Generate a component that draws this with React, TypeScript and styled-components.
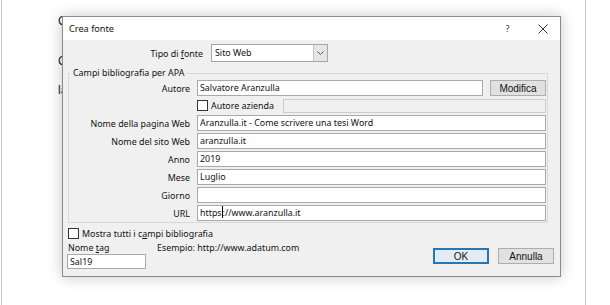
import styled, { createGlobalStyle } from 'styled-components'

const GlobalStyle = createGlobalStyle`
  html, body {
    margin: 0;
    padding: 0;
    background: #ffffff;
  }
  body {
    font-family: 'Segoe UI', 'Noto Sans', sans-serif;
  }
`

const Canvas = styled.div`
  position: relative;
  width: 610px;
  height: 305px;
  overflow: hidden;
  background: #ffffff;
`

const Paper = styled.div`
  box-sizing: border-box;
  margin-left: 1px;
  width: 585px;
  height: 305px;
  border-left: 1px solid #c8c8c8;
  border-right: 1px solid #c8c8c8;
  padding: 15px 0 0 56px;
  font-family: 'Liberation Sans', Arial, sans-serif;
  font-size: 12px;
  line-height: 12px;
  color: #222;
`

const DocLine = styled.p<{ $gap: number }>`
  margin: ${({ $gap }) => $gap}px 0 0;
  white-space: nowrap;
`

const Dialog = styled.div`
  position: absolute;
  left: 62px;
  top: 16px;
  width: 499px;
  height: 261px;
  box-sizing: border-box;
  border: 1px solid #8a8a8a;
  background: #f0f0f0;
  box-shadow: 0 0 14px rgba(0, 0, 0, 0.22);
  display: flex;
  flex-direction: column;
  font-size: 8.9px;
  color: #111;
`

const TitleBar = styled.div`
  height: 23px;
  flex: none;
  background: #ffffff;
  display: flex;
  align-items: center;
  padding-left: 6px;
  font-size: 9.2px;
`

const Title = styled.span`
  flex: 1;
`

const TitleButton = styled.span`
  width: 35px;
  height: 23px;
  display: flex;
  align-items: center;
  justify-content: center;
  color: #333;
`

const Body = styled.div`
  flex: 1;
  display: flex;
  flex-direction: column;
  padding: 4px 6px 7px 0;
`

const TipoRow = styled.div`
  display: flex;
  align-items: center;
  gap: 8px;
`

const TipoLabel = styled.span`
  width: 140px;
  text-align: right;
`

const Select = styled.div`
  box-sizing: border-box;
  width: 117px;
  height: 18px;
  display: flex;
  border: 1px solid #a6a6a6;
  background: #ffffff;
`

const SelectValue = styled.span`
  flex: 1;
  padding-left: 3px;
  line-height: 16px;
`

const SelectArrow = styled.span`
  width: 13px;
  border-left: 1px solid #c4c4c4;
  background: #e6e6e6;
  display: flex;
  align-items: center;
  justify-content: center;
`

const Group = styled.fieldset`
  margin: 5px 6px 0 5px;
  padding: 1px 1px 1px 0;
  border: 1px solid #d9d9d9;
  min-width: 0;
  display: flex;
  flex-direction: column;
  gap: 2px;
`

const Legend = styled.legend`
  padding: 0 2px;
  margin-left: 2px;
  line-height: 12px;
`

const Row = styled.div`
  display: flex;
  align-items: center;
  gap: 7px;
  height: 16px;
`

const Label = styled.span`
  width: 121px;
  text-align: right;
  white-space: nowrap;
`

const Input = styled.div<{ $disabled?: boolean }>`
  box-sizing: border-box;
  flex: 1;
  height: 16px;
  border: 1px solid ${({ $disabled }) => ($disabled ? '#cccccc' : '#a9a9a9')};
  background: ${({ $disabled }) => ($disabled ? '#f0f0f0' : '#ffffff')};
  padding-left: 2px;
  line-height: 14px;
  white-space: nowrap;
`

const Caret = styled.span`
  display: inline-block;
  width: 1px;
  height: 12px;
  background: #000;
  vertical-align: -2px;
`

const Button = styled.div<{ $primary?: boolean; $width: number }>`
  box-sizing: border-box;
  width: ${({ $width }) => $width}px;
  height: 16px;
  display: flex;
  align-items: center;
  justify-content: center;
  background: ${({ $primary }) => ($primary ? '#e2ecf5' : '#e1e1e1')};
  border: ${({ $primary }) => ($primary ? '2px solid #2a76b5' : '1px solid #adadad')};
  font-family: 'Liberation Sans', Arial, sans-serif;
  font-size: 10px;
  color: #111;
`

const CheckRow = styled.label`
  display: flex;
  align-items: center;
  gap: 3px;
  height: 15px;
`

const Box = styled.span`
  box-sizing: border-box;
  width: 11px;
  height: 11px;
  border: 1px solid #333;
  background: #fff;
`

const CompanyRow = styled.div`
  display: flex;
  align-items: center;
  height: 15px;
  padding-left: 128px;
`

const CompanyInput = styled(Input)`
  height: 14px;
  margin-left: 9px;
`

const MostraRow = styled(CheckRow)`
  height: 13px;
  margin: 4px 0 0 5px;
`

const Footer = styled.div`
  display: flex;
  align-items: flex-end;
  margin-top: 2px;
  padding-left: 4px;
`

const TagColumn = styled.div`
  display: flex;
  flex-direction: column;
  width: 79px;
  flex: none;
`

const TagLabel = styled.span`
  padding-left: 1px;
  line-height: 12px;
`

const TagInput = styled(Input)`
  flex: none;
  height: 15px;
  line-height: 13px;
`

const Example = styled.span`
  align-self: flex-start;
  margin-left: 11px;
  line-height: 12px;
  flex: 1;
`

const Actions = styled.div`
  display: flex;
  gap: 9px;
  margin-bottom: 5px;
`

const fields = [
  { label: 'Nome della pagina Web', value: 'Aranzulla.it - Come scrivere una tesi Word' },
  { label: 'Nome del sito Web', value: 'aranzulla.it' },
  { label: 'Anno', value: '2019' },
  { label: 'Mese', value: 'Luglio' },
  { label: 'Giorno', value: '' },
]

export default function App() {
  return (
    <>
      <GlobalStyle />
      <Canvas>
        <Paper>
          <DocLine $gap={0}>C</DocLine>
          <DocLine $gap={28}>C</DocLine>
          <DocLine $gap={17}>la</DocLine>
        </Paper>

        <Dialog>
          <TitleBar>
            <Title>Crea fonte</Title>
            <TitleButton>?</TitleButton>
            <TitleButton>
              <svg width="10" height="10" viewBox="0 0 10 10">
                <path d="M0.5 0.5 L9.5 9.5 M9.5 0.5 L0.5 9.5" stroke="#333" strokeWidth="1" />
              </svg>
            </TitleButton>
          </TitleBar>

          <Body>
            <TipoRow>
              <TipoLabel>
                Tipo di <u>f</u>onte
              </TipoLabel>
              <Select>
                <SelectValue>Sito Web</SelectValue>
                <SelectArrow>
                  <svg width="7" height="4" viewBox="0 0 7 4">
                    <path d="M0.5 0.5 L3.5 3.5 L6.5 0.5" fill="none" stroke="#555" strokeWidth="1" />
                  </svg>
                </SelectArrow>
              </Select>
            </TipoRow>

            <Group>
              <Legend>Campi bibliografia per APA</Legend>
              <Row>
                <Label>Autore</Label>
                <Input>Salvatore Aranzulla</Input>
                <Button $width={56}>Modifica</Button>
              </Row>
              <CompanyRow>
                <CheckRow>
                  <Box />
                  Autore azienda
                </CheckRow>
                <CompanyInput $disabled />
              </CompanyRow>
              {fields.map((f) => (
                <Row key={f.label}>
                  <Label>{f.label}</Label>
                  <Input>{f.value}</Input>
                </Row>
              ))}
              <Row>
                <Label>URL</Label>
                <Input>
                  https
                  <Caret />
                  ://www.aranzulla.it
                </Input>
              </Row>
            </Group>

            <MostraRow>
              <Box />
              <span>
                Mostra tutti i c<u>a</u>mpi bibliografia
              </span>
            </MostraRow>

            <Footer>
              <TagColumn>
                <TagLabel>
                  Nome <u>t</u>ag
                </TagLabel>
                <TagInput>Sal19</TagInput>
              </TagColumn>
              <Example>Esempio: http://www.adatum.com</Example>
              <Actions>
                <Button $primary $width={56}>
                  OK
                </Button>
                <Button $width={56}>Annulla</Button>
              </Actions>
            </Footer>
          </Body>
        </Dialog>
      </Canvas>
    </>
  )
}
